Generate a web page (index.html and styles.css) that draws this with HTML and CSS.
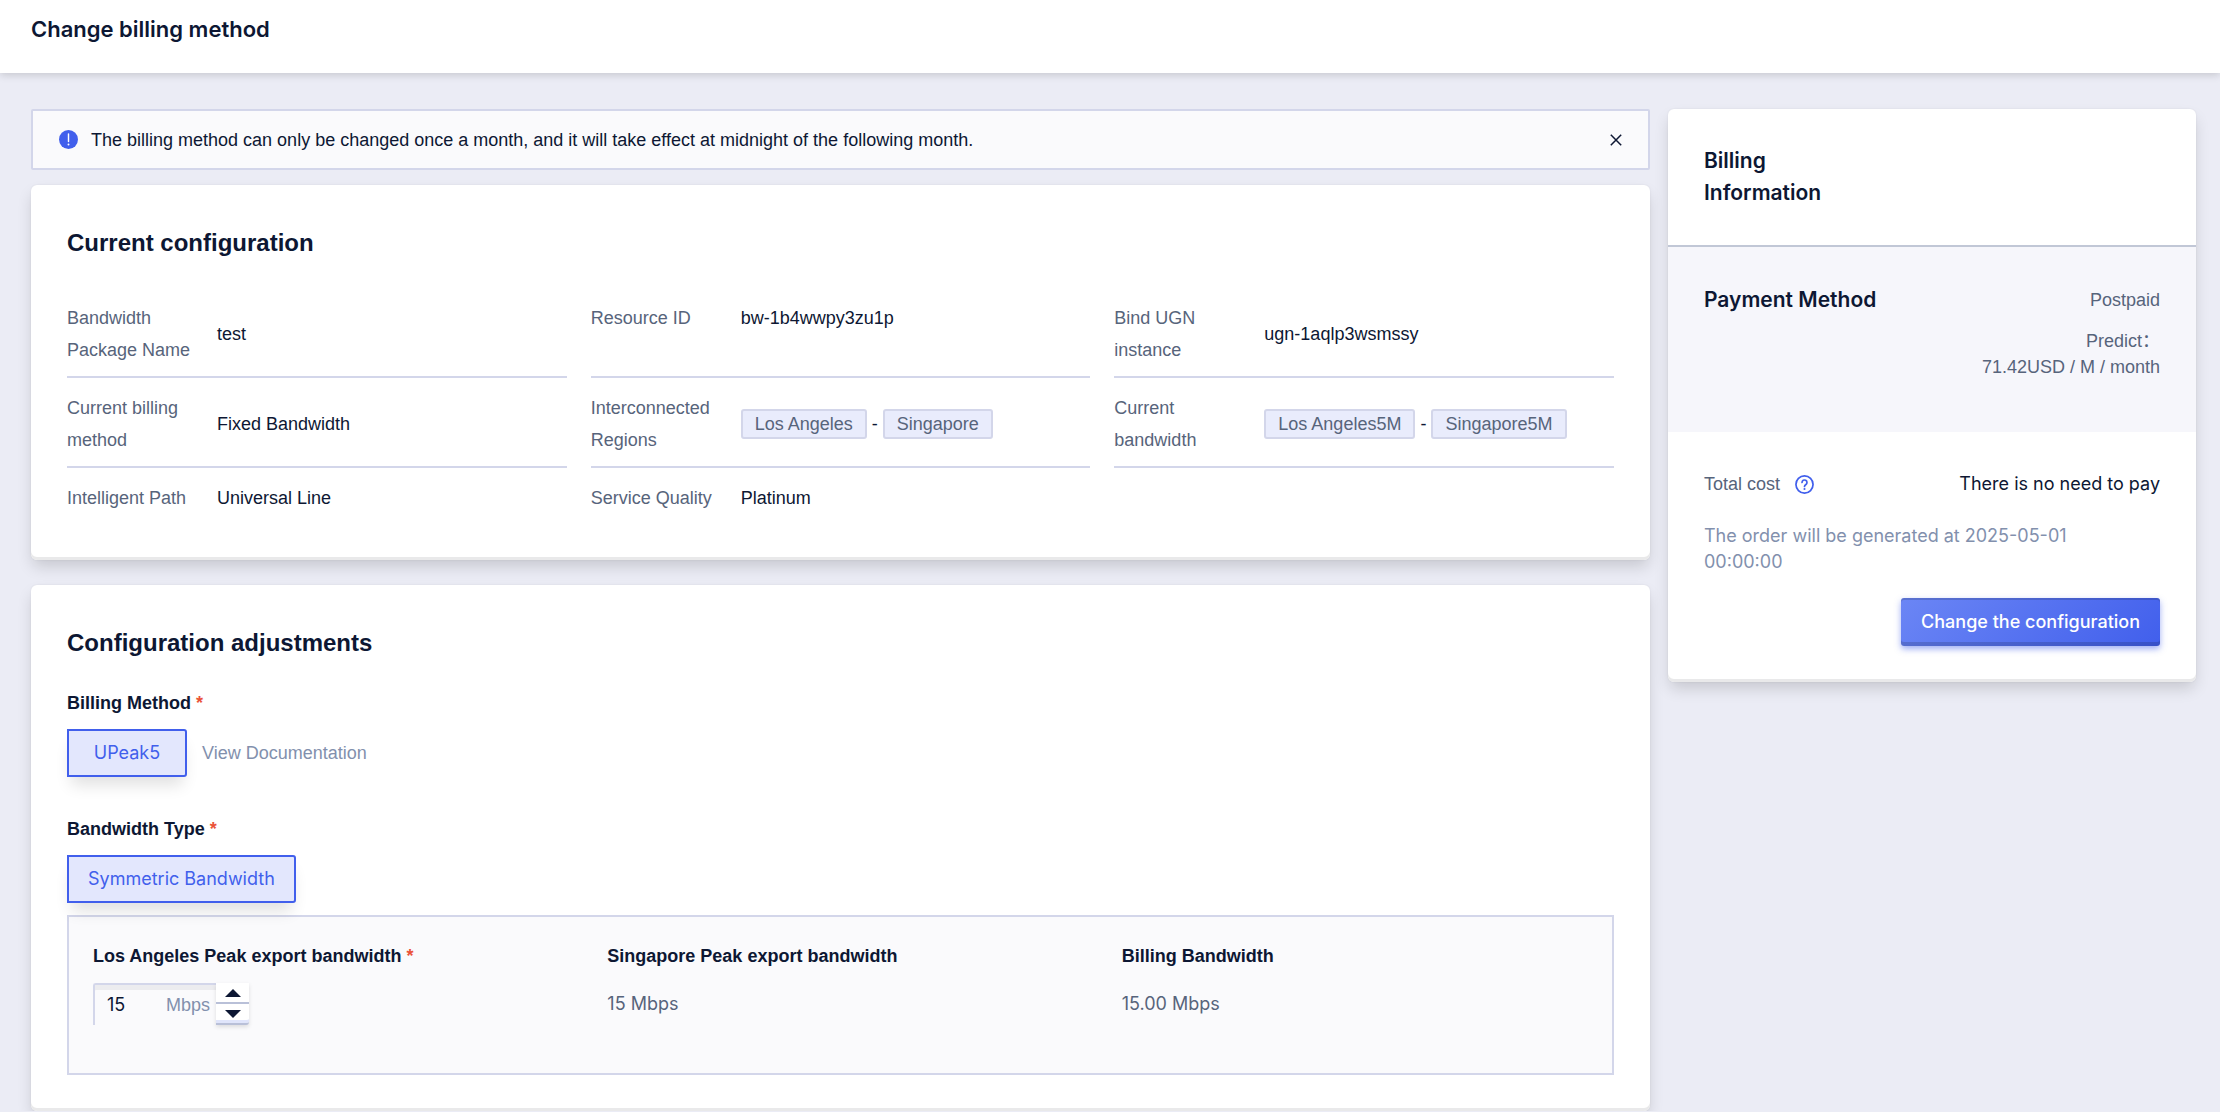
FILE: index.html
```html
<!DOCTYPE html>
<html lang="en">

<head>
    <meta charset="UTF-8">
    <meta name="viewport" content="width=device-width, initial-scale=1.0">
    <title>Change billing method</title>
    <link rel="stylesheet" href="styles.css">
</head>

<body>
    <header class="page-header">
        <h1>Change billing method</h1>
    </header>

    <div class="page">
        <main class="main">
            <div class="notice" role="alert">
                <svg class="notice-icon" viewBox="0 0 20 20" aria-hidden="true">
                    <circle cx="10" cy="10" r="10" fill="#415fec" />
                    <path d="M10 4.200v8" stroke="#fff" stroke-width="1.500" stroke-linecap="round" />
                    <circle cx="10" cy="15.300" r="1" fill="#fff" />
                </svg>
                <p>The billing method can only be changed once a month, and it will take effect at midnight of the following month.</p>
                <button type="button" class="notice-close" aria-label="Close">
                    <svg viewBox="0 0 12 12" aria-hidden="true">
                        <path d="M.8.8l10.4 10.4M11.2.8L.8 11.2" fill="none" stroke="#0d1733" stroke-width="1.5" />
                    </svg>
                </button>
            </div>

            <section class="card">
                <h2>Current configuration</h2>
                <dl class="info-grid">
                    <div class="info-item">
                        <dt>Bandwidth Package Name</dt>
                        <dd>test</dd>
                    </div>
                    <div class="info-item info-top">
                        <dt>Resource ID</dt>
                        <dd>bw-1b4wwpy3zu1p</dd>
                    </div>
                    <div class="info-item">
                        <dt>Bind UGN instance</dt>
                        <dd>ugn-1aqlp3wsmssy</dd>
                    </div>
                    <div class="info-item">
                        <dt>Current billing method</dt>
                        <dd>Fixed Bandwidth</dd>
                    </div>
                    <div class="info-item">
                        <dt>Interconnected Regions</dt>
                        <dd><span class="tag">Los Angeles</span> - <span class="tag">Singapore</span></dd>
                    </div>
                    <div class="info-item">
                        <dt>Current bandwidth</dt>
                        <dd><span class="tag">Los Angeles5M</span> - <span class="tag">Singapore5M</span></dd>
                    </div>
                    <div class="info-item info-last">
                        <dt>Intelligent Path</dt>
                        <dd>Universal Line</dd>
                    </div>
                    <div class="info-item info-last">
                        <dt>Service Quality</dt>
                        <dd>Platinum</dd>
                    </div>
                </dl>
            </section>

            <section class="card">
                <h2>Configuration adjustments</h2>

                <div class="field">
                    <h3>Billing Method <span class="required">*</span></h3>
                    <div class="field-row">
                        <button type="button" class="option">UPeak5</button>
                        <a href="#" class="doc-link">View Documentation</a>
                    </div>
                </div>

                <div class="field">
                    <h3>Bandwidth Type <span class="required">*</span></h3>
                    <div class="field-row">
                        <button type="button" class="option">Symmetric Bandwidth</button>
                    </div>
                </div>

                <div class="bandwidth-panel">
                    <div class="bandwidth-col">
                        <label class="col-title" for="peakInput">Los Angeles Peak export bandwidth <span class="required">*</span></label>
                        <div class="number-box">
                            <div class="number-field">
                                <input type="text" inputmode="numeric" id="peakInput" value="15">
                                <span class="unit">Mbps</span>
                            </div>
                            <div class="stepper">
                                <button type="button" aria-label="Increase">
                                    <svg viewBox="0 0 16 8" aria-hidden="true"><path d="M8 0l8 8H0z" fill="#0d1733" /></svg>
                                </button>
                                <button type="button" aria-label="Decrease">
                                    <svg viewBox="0 0 16 8" aria-hidden="true"><path d="M0 0h16L8 8z" fill="#0d1733" /></svg>
                                </button>
                            </div>
                        </div>
                    </div>
                    <div class="bandwidth-col">
                        <p class="col-title">Singapore Peak export bandwidth</p>
                        <p class="col-value">15 Mbps</p>
                    </div>
                    <div class="bandwidth-col">
                        <p class="col-title">Billing Bandwidth</p>
                        <p class="col-value">15.00 Mbps</p>
                    </div>
                </div>
            </section>
        </main>

        <aside class="billing">
            <h2 class="billing-title">Billing<br>Information</h2>
            <div class="payment">
                <h3>Payment Method</h3>
                <div class="payment-detail">
                    <p>Postpaid</p>
                    <p>Predict：<br>71.42USD / M / month</p>
                </div>
            </div>
            <div class="total">
                <div class="total-row">
                    <span class="total-label">Total cost</span>
                    <svg class="help-icon" viewBox="0 0 20 20" aria-hidden="true">
                        <circle cx="10" cy="10" r="9" fill="none" stroke="#415fec" stroke-width="1.8" />
                        <path d="M7.4 7.800a2.600 2.600 0 1 1 4.100 2.200c-1 .7-1.500 1.100-1.500 2.100" fill="none" stroke="#415fec" stroke-width="1.8" stroke-linecap="round" />
                        <circle cx="10" cy="14.700" r="1.100" fill="#415fec" />
                    </svg>
                    <span class="total-value">There is no need to pay</span>
                </div>
                <p class="order-note">The order will be generated at 2025-05-01<br>00:00:00</p>
                <div class="actions">
                    <button type="button" class="submit">Change the configuration</button>
                </div>
            </div>
        </aside>
    </div>
</body>

</html>
```
FILE: styles.css
```css
* {
    box-sizing: border-box;
}

body {
    margin: 0;
    font-family: "Liberation Sans", Arial, "Noto Sans CJK SC", sans-serif;
    font-size: 18px;
    line-height: 26px;
    color: #0d1733;
    background-color: #ebecf5;
}

h1,
h2,
h3,
p,
dl,
dd {
    margin: 0;
}

button,
input {
    font: inherit;
    color: inherit;
}

button {
    cursor: pointer;
}

svg {
    display: block;
}

.page-header {
    position: relative;
    height: 73px;
    padding: 15px 31px;
    background-color: #fff;
    box-shadow: 0 2px 8px rgba(0, 0, 0, 0.16);
}

.page-header h1 {
    font-family: Inter, sans-serif;
    font-size: 22px;
    font-weight: 600;
    line-height: 28px;
}

.page {
    display: flex;
    align-items: flex-start;
    gap: 18px;
    padding: 36px 24px 0 31px;
}

.main {
    flex: 1;
    min-width: 0;
}

/* notice */
.notice {
    display: flex;
    align-items: center;
    height: 61px;
    margin-bottom: 15px;
    padding: 0 24px 0 26px;
    background-color: #fafafc;
    border: 2px solid #d3d6ea;
    border-radius: 2px;
}

.notice p {
    flex: 1;
}

.notice-icon {
    width: 19px;
    height: 19px;
    margin-right: 13px;
}

.notice-close {
    padding: 2px;
    background: none;
    border: 0;
}

.notice-close svg {
    width: 12px;
    height: 12px;
}

/* cards */
.card,
.billing {
    background-color: #fff;
    border-radius: 6px;
    box-shadow: inset 0 -3px 0 #e9e9ea, 0 8px 16px -2px rgba(0, 0, 0, 0.16), 0 0 2px rgba(0, 0, 0, 0.08);
}

.card {
    padding: 42px 36px 36px;
}

.card + .card {
    margin-top: 25px;
}

.card h2 {
    font-size: 24px;
    line-height: 32px;
}

.info-grid {
    display: grid;
    grid-template-columns: repeat(3, 1fr);
    column-gap: 24px;
    margin-top: 29px;
}

.info-item {
    display: flex;
    align-items: center;
    padding: 14px 0 10px;
    line-height: 32px;
    border-bottom: 2px solid #d3d6ea;
}

.info-top {
    align-items: flex-start;
}

.info-last {
    border-bottom: 0;
}

.info-item dt {
    width: 150px;
    padding-right: 24px;
    color: #57647b;
}

.tag {
    display: inline-block;
    padding: 0 12px;
    line-height: 26px;
    color: #57647b;
    background-color: #e9ecfc;
    border: 2px solid #d3d6ea;
    border-radius: 3px;
}

/* form */
.field {
    margin-top: 31px;
}

.field + .field {
    margin-top: 39px;
}

.field h3,
.col-title {
    display: block;
    font-size: 18px;
    font-weight: bold;
    line-height: 26px;
}

.required {
    color: #ea5238;
}

.field-row {
    display: flex;
    align-items: center;
    gap: 15px;
    margin-top: 13px;
}

.option {
    min-width: 120px;
    height: 48px;
    padding: 0 19px;
    font-family: Inter, sans-serif;
    color: #415fec;
    background-color: #e3e7fd;
    border: 2px solid #415fec;
    border-radius: 0 3px 3px 0;
    box-shadow: 0 12px 16px -4px rgba(0, 0, 0, 0.12);
}

.doc-link {
    color: #8290ad;
    text-decoration: none;
}

.bandwidth-panel {
    display: grid;
    grid-template-columns: repeat(3, 1fr);
    column-gap: 48px;
    margin-top: 12px;
    padding: 26px 24px 48px;
    background-color: #fafafc;
    border: 2px solid #d3d6ea;
}

.col-value {
    margin-top: 14px;
    font-family: Inter, sans-serif;
    line-height: 42px;
    color: #57647b;
}

.number-box {
    display: flex;
    width: 156px;
    height: 42px;
    margin-top: 14px;
}

.number-field {
    flex: 1;
    min-width: 0;
    display: flex;
    align-items: center;
    padding: 0 6px 0 12px;
    border-top: 2px solid #d3d6ea;
    border-left: 2px solid #d3d6ea;
    border-radius: 3px 0 0 0;
    box-shadow: inset 0 5px 0 #ececef;
}

.number-field input {
    flex: 1;
    width: 100%;
    min-width: 0;
    padding: 0;
    font-family: Inter, sans-serif;
    background: none;
    border: 0;
}

.unit {
    color: #8290ad;
}

.stepper {
    display: flex;
    flex: 0 0 33px;
    flex-direction: column;
    background-color: #fff;
    border-bottom: 2px solid #b9c0d8;
    border-radius: 0 0 3px 0;
    box-shadow: inset 0 -3px 0 #e0e5fb, 0 2px 4px rgba(0, 0, 0, 0.12);
}

.stepper button {
    display: flex;
    flex: 1;
    align-items: center;
    justify-content: center;
    padding: 0;
    background: none;
    border: 0;
}

.stepper button + button {
    border-top: 2px solid #b9c0d8;
}

.stepper svg {
    width: 16px;
    height: 8px;
}

/* billing sidebar */
.billing {
    flex: 0 0 528px;
}

.billing-title {
    padding: 36px;
    font-family: Inter, sans-serif;
    font-size: 21px;
    font-weight: 600;
    line-height: 32px;
    border-bottom: 2px solid #c1c7d6;
}

.payment {
    display: flex;
    justify-content: space-between;
    padding: 40px 36px 52px;
    color: #57647b;
    background-color: #f6f6fb;
}

.payment h3 {
    font-family: Inter, sans-serif;
    font-size: 21px;
    font-weight: 600;
    color: #0d1733;
}

.payment-detail {
    text-align: right;
}

.payment-detail p + p {
    margin-top: 15px;
}

.total {
    padding: 39px 36px 36px;
}

.total-row {
    display: flex;
    align-items: center;
}

.total-label {
    color: #57647b;
}

.help-icon {
    width: 19px;
    height: 19px;
    margin-left: 15px;
}

.total-value {
    margin-left: auto;
    font-family: Inter, sans-serif;
}

.order-note {
    margin-top: 26px;
    font-family: Inter, sans-serif;
    color: #8290ad;
}

.actions {
    display: flex;
    justify-content: flex-end;
    margin-top: 23px;
}

.submit {
    height: 48px;
    padding: 0 20px;
    font-family: Inter, sans-serif;
    font-weight: 500;
    color: #fff;
    background: linear-gradient(135deg, #6b86f5, #415fec);
    border: 0;
    border-radius: 3px;
    box-shadow: inset 0 2px 0 rgba(0, 0, 0, 0.15), inset 0 -4px 0 rgba(0, 0, 0, 0.15), 0 3px 6px rgba(65, 95, 236, 0.5);
}
```
